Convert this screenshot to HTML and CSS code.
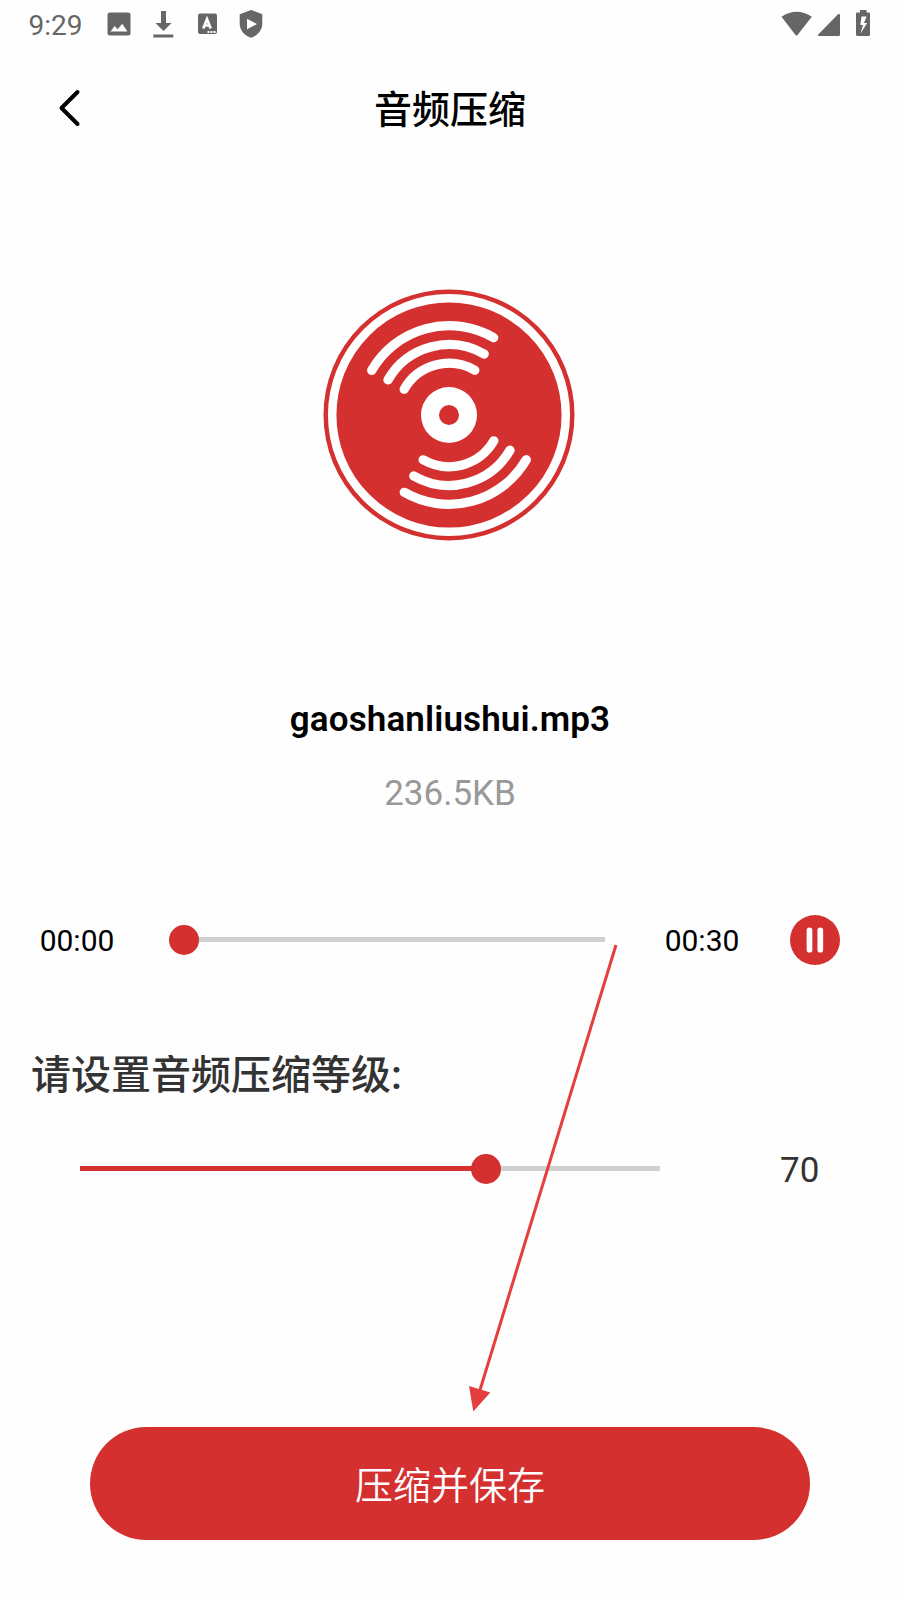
FILE: index.html
```html
<!DOCTYPE html>
<html lang="zh-CN">
<head>
<meta charset="utf-8">
<title>音频压缩</title>
<link rel="stylesheet" href="styles.css">
</head>
<body>
<div class="screen">
  <div class="status">
    <span class="clock">9:29</span>
    <svg class="status-left" width="160" height="30" viewBox="105 9 160 30">
      <path fill-rule="evenodd" d="M110 12.5h18a2.5 2.5 0 0 1 2.500 2.500v18a2.500 2.500 0 0 1-2.500 2.500h-18a2.500 2.500 0 0 1-2.500-2.500v-18a2.500 2.500 0 0 1 2.500-2.500zM110.500 31.500h17l-5.300-7.700-4.500 5.500-3-3.300z"/>
      <path d="M161 11h5v12h5.500L163.500 31l-8-8h5.500zM153.300 34.500h20v3h-20z"/>
      <path d="M200 13.500h15a2 2 0 0 1 2 2v16.500a2 2 0 0 1-2 2h-15a2 2 0 0 1-2-2v-16.500a2 2 0 0 1 2-2z"/>
      <path d="M203.300 28.500l3.700-9.500 3.700 9.500M204.600 25.500h5" fill="none" stroke="#fff" stroke-width="2.600"/>
      <path fill="#fff" d="M207.500 31h2v2h-2zM210.500 31h2v2h-2zM213.500 31h2v2h-2z"/>
      <path fill-rule="evenodd" d="M251 10l11.300 4.200v9.300c0 6.500-4.500 12-11.300 14.300c-6.800-2.300-11.300-7.800-11.300-14.300v-9.300zM247 18.800v10.500l10-5.200z"/>
    </svg>
    <svg class="status-right" width="95" height="30" viewBox="778 9 95 30">
      <path d="M781.500 16.700q15-9.800 30.300 0L797.500 35q-1 1-2 0z"/>
      <path d="M838.300 14q1.700-.5 1.700 1v19.500q0 1.500-1.500 1.500h-19.200q-2.200 0-.8-1.800z"/>
      <path fill-rule="evenodd" d="M860 10h6.500v2.500h2.200q1.300 0 1.300 1.300v20.700q0 1.500-1.500 1.500h-11q-1.500 0-1.500-1.500v-20.700q0-1.300 1.300-1.300h2.700zM861.500 16.500l-1.200 8.500h2.700l-2.500 8.500 6.700-10.500h-3.200l2.600-6.500z"/>
    </svg>
  </div>

  <header class="bar">
    <svg class="back" width="26" height="40" viewBox="57 88 26 40"><path d="M77.500 92L61.500 108L77.500 124"/></svg>
    <h1 class="title">音频压缩</h1>
  </header>

  <svg class="disc" width="252" height="252" viewBox="-126 -126 252 252">
    <circle class="red" r="125.500"/>
    <circle class="ring" r="116.800"/>
    <g class="groove">
      <path d="M-77.300-44.700A89.300 89.300 0 0 1 44.700-77.300M-61-35.200A70.500 70.500 0 0 1 35.200-61M-44.800-25.800A51.700 51.700 0 0 1 25.800-44.800"/>
      <path d="M77.300 44.700A89.300 89.300 0 0 1-44.700 77.300M61 35.200A70.500 70.500 0 0 1-35.200 61M44.800 25.800A51.700 51.700 0 0 1-25.800 44.800"/>
    </g>
    <circle class="hub" r="28"/>
    <circle class="red" r="10"/>
  </svg>

  <div class="name">gaoshanliushui.mp3</div>
  <div class="size">236.5KB</div>

  <div class="player">
    <span class="time">00:00</span>
    <div class="track seek"><div class="fill" style="width:0%"><i class="thumb"></i></div></div>
    <span class="time">00:30</span>
    <svg class="pause" width="50" height="50" viewBox="0 0 50 50"><circle class="red" cx="25" cy="25" r="25"/><path d="M19.500 15.300v19.400M30.300 15.300v19.400"/></svg>
  </div>

  <div class="label">请设置音频压缩等级<b>:</b></div>

  <div class="level">
    <div class="track amount"><div class="fill" style="width:70%"><i class="thumb"></i></div></div>
    <span class="value">70</span>
  </div>

  <button class="save">压缩并保存</button>

  <svg class="pointer" width="160" height="480" viewBox="465 940 160 480">
    <path class="shaft" d="M616 945L480 1390"/>
    <path class="head" d="M469 1386L490.300 1392.500L473.300 1411.500Z"/>
  </svg>
</div>
</body>
</html>
```
FILE: styles.css
```css
* { box-sizing: border-box; }
body { margin: 0; background: #fefefe; font-family: Roboto, "Noto Sans CJK SC", sans-serif; }
.screen { position: relative; width: 900px; height: 1600px; display: flex; flex-direction: column; overflow: hidden; }
.status { height: 48px; display: flex; align-items: center; padding: 0 27px 0 28.5px; color: #666; fill: #666; }
.clock { width: 76.5px; font-size: 28px; line-height: 32px; padding-top: 4px; font-weight: 400; }
.status-left, .status-right { display: block; }
.status-right { margin-left: auto; }
.bar { height: 120px; display: grid; grid-template-columns: 57px 26px 1fr 83px; align-items: center; }
.back { grid-column: 2; fill: none; stroke: #000; stroke-width: 4; stroke-linecap: round; stroke-linejoin: round; }
.title { grid-column: 3; margin: 0; padding-top: 4px; text-align: center; font-size: 38px; line-height: 56px; font-weight: 500; color: #000; }
.disc { margin: 121px 0 0 323px; flex: none; }
.red { fill: #d4302f; }
.ring { fill: none; stroke: #fff; stroke-width: 8.500; }
.groove { fill: none; stroke: #fff; stroke-width: 9.300; stroke-linecap: round; }
.hub { fill: #fff; }
.name { margin-top: 158px; height: 42px; line-height: 42px; text-align: center; font-size: 35px; font-weight: 600; letter-spacing: .12px; color: #000; }
.size { margin-top: 32px; height: 42px; line-height: 42px; text-align: center; font-size: 35px; color: #999; }
.player { margin-top: 100px; height: 50px; display: flex; align-items: center; padding: 0 60px 0 39px; }
.time { width: 76px; font-size: 30px; line-height: 36px; color: #000; text-align: center; padding-top: 2px; }
.track { height: 5px; background: #d0d0d2; }
.fill { height: 5px; display: flex; align-items: center; justify-content: flex-end; background: #d4302f; }
.thumb { flex: none; width: 30px; height: 30px; border-radius: 50%; background: #d4302f; margin-right: -15px; }
.seek { width: 422px; margin: 0 59px 1px 68px; }
.seek .thumb { margin-right: -15.5px; }
.pause { margin-left: auto; }
.pause path { stroke: #fff; stroke-width: 5.700; stroke-linecap: round; }
.label { margin-top: 82px; height: 58px; padding-left: 31px; font-size: 40px; line-height: 58px; font-weight: 500; color: #333; }
.label b { font-weight: 600; }
.level { margin-top: 43px; height: 42px; display: flex; align-items: center; padding-left: 80px; }
.amount { width: 580px; margin-bottom: 1px; }
.amount .thumb { margin-right: -14.500px; }
.value { width: 40px; margin-left: 120px; padding-top: 3px; font-size: 35px; line-height: 42px; color: #333; }
.save { margin: 237px 90px 0; height: 113px; padding: 0 0 3px; border: 0; border-radius: 57px; background: #d4302f; color: #fff; font-family: inherit; font-size: 38px; font-weight: 350; flex: none; }
.pointer { position: absolute; left: 465px; top: 940px; }
.shaft { fill: none; stroke: #e53e3e; stroke-width: 3; }
.head { fill: #e53e3e; }
```
